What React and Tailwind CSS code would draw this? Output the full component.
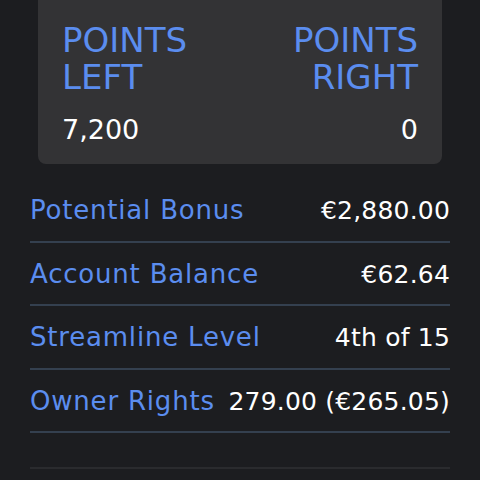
const rows = [
  { label: 'Potential Bonus', value: '€2,880.00' },
  { label: 'Account Balance', value: '€62.64' },
  { label: 'Streamline Level', value: '4th of 15' },
  { label: 'Owner Rights', value: '279.00 (€265.05)' },
]

export default function App() {
  return (
    <div
      className="w-[480px] h-[480px] overflow-hidden bg-[#1c1d20] text-white"
      style={{ fontFamily: '"DejaVu Sans", sans-serif' }}
    >
      <div className="mx-[38px] h-[164px] rounded-b-lg bg-[#333335] px-6 pt-[22px] flex flex-col">
        <div className="flex justify-between text-[34px] leading-[37px] text-[#5b8def]">
          <div>POINTS<br />LEFT</div>
          <div className="text-right">POINTS<br />RIGHT</div>
        </div>
        <div className="flex justify-between mt-[18px] text-[27px] leading-[32px]">
          <span>7,200</span>
          <span>0</span>
        </div>
      </div>

      <div className="mx-[30px] mt-[15px]">
        {rows.map((r) => (
          <div key={r.label} className="flex items-center justify-between h-[63.5px] pt-[2px] border-b-2 border-[#34404f]">
            <span className="text-[26px] tracking-[0.8px] text-[#5b8def]">{r.label}</span>
            <span className="text-[25px] tracking-[0.2px]">{r.value}</span>
          </div>
        ))}
        <div className="h-[36px] border-b-2 border-[#2a2b2e]" />
      </div>
    </div>
  )
}
